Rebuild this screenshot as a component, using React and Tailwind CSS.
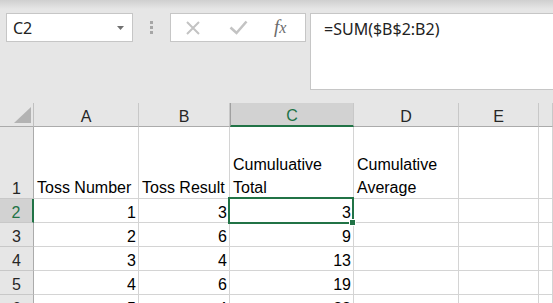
import React from "react";

const rows = [
    {n: "2", a: "1", b: "3", c: "3", selected: true},
    {n: "3", a: "2", b: "6", c: "9"},
    {n: "4", a: "3", b: "4", c: "13"},
    {n: "5", a: "4", b: "6", c: "19"},
    {n: "6", a: "5", b: "4", c: "23"},
];

const headCell = "flex items-end justify-center leading-[18px] bg-[#e6e6e6] border-r border-b border-r-[#c8c8c8] border-b-[#ababab] text-[#262626]";
const rowHead = "flex items-end justify-center leading-[18px] bg-[#e6e6e6] border-r border-b border-r-[#ababab] border-b-[#c8c8c8] text-[#262626]";
const cell = "flex items-end bg-white border-r border-b border-[#d4d4d4] leading-[18px] text-black";
const numCell = "flex items-end justify-end pr-[2px] bg-white border-r border-b border-[#d4d4d4] leading-[18px] text-black";

function FormulaBar() {
    return (
        <div className="h-[103px] flex items-start pt-[13px] pl-[6px] bg-[linear-gradient(#cfcfcf,#e6e6e6_9px)]">
            {/* name box */}
            <div className="shrink-0 w-[127px] h-[29px] flex items-center justify-between bg-white border border-[#c6c6c6] pl-[6px] pr-[8px]">
                <span className="font-['Noto_Sans'] text-[16px] leading-[22px] text-[#222]">C2</span>
                <svg width="7" height="4" viewBox="0 0 7 4"><polygon points="0,0 7,0 3.5,4" fill="#707070"/></svg>
            </div>

            {/* splitter dots */}
            <div className="shrink-0 ml-[17px] mt-[8px] flex flex-col gap-[2px]">
                <div className="w-[3px] h-[3px] bg-[#a6a6a6]"></div>
                <div className="w-[3px] h-[3px] bg-[#a6a6a6]"></div>
                <div className="w-[3px] h-[3px] bg-[#a6a6a6]"></div>
            </div>

            {/* cancel / enter / function */}
            <div className="shrink-0 ml-[17px] w-[136px] h-[29px] flex items-center bg-white border border-[#c6c6c6]">
                <svg className="ml-[15px]" width="14" height="14" viewBox="0 0 14 14">
                    <path d="M1 1 L13 13 M13 1 L1 13" stroke="#c3c3c3" strokeWidth="2"/>
                </svg>
                <svg className="ml-[29px]" width="19" height="15" viewBox="0 0 19 15">
                    <path d="M1.5 7.5 L7.5 13 L17.5 1.5" stroke="#c3c3c3" strokeWidth="2.6" fill="none"/>
                </svg>
                <span className="ml-[26px] font-['Liberation_Serif'] italic text-[#6b6b6b] leading-[20px]">
                    <span className="text-[19px]">f</span><span className="text-[16px]">x</span>
                </span>
            </div>

            {/* formula input */}
            <div className="shrink-0 ml-[4px] w-[260px] h-[77px] bg-white border border-[#c6c6c6] pl-[13px] pt-[3px]">
                <span className="font-['Noto_Sans'] text-[16px] leading-[22px] text-[#222]">=SUM($B$2:B2)</span>
            </div>
        </div>
    );
}

function Sheet() {
    return (
        <div className="relative grid grid-cols-[34px_105px_91px_124px_105px_80px_1fr] grid-rows-[24px_72px_24px_24px_24px_24px_24px] font-['Liberation_Sans'] text-[16px]">
            {/* corner */}
            <div className="flex items-end justify-end pr-[2px] pb-[3px] bg-[#e6e6e6] border-r border-b border-r-[#c0c0c0] border-b-[#ababab]">
                <svg width="17" height="16" viewBox="0 0 17 16"><polygon points="17,0 17,16 0,16" fill="#b3b3b3"/></svg>
            </div>
            <div className={headCell}>A</div>
            <div className={headCell}>B</div>
            <div className="flex items-end justify-center leading-[18px] bg-[#d2d2d2] border-l border-l-[#a0a0a0] border-r border-r-[#c8c8c8] border-b-2 border-b-[#217346] text-[#217346]">C</div>
            <div className={headCell}>D</div>
            <div className={headCell}>E</div>
            <div className={headCell}></div>

            {/* row 1 */}
            <div className={rowHead}>1</div>
            <div className={cell + " pl-[3px]"}><span className="leading-[23px] mb-[-1px]">Toss Number</span></div>
            <div className={cell + " pl-[3px]"}><span className="leading-[23px] mb-[-1px]">Toss Result</span></div>
            <div className={cell + " pl-[3px]"}><span className="leading-[23px] mb-[-1px]">Cumuluative<br/>Total</span></div>
            <div className={cell + " pl-[3px]"}><span className="leading-[23px] mb-[-1px]">Cumulative<br/>Average</span></div>
            <div className={cell}></div>
            <div className={cell}></div>

            {rows.map((r) => (
                <React.Fragment key={r.n}>
                    {r.selected
                        ? <div className="flex items-end justify-center leading-[18px] bg-[#d2d2d2] border-r-2 border-r-[#217346] border-b border-b-[#c8c8c8] text-[#217346]">{r.n}</div>
                        : <div className={rowHead}>{r.n}</div>}
                    <div className={numCell}>{r.a}</div>
                    <div className={numCell}>{r.b}</div>
                    <div className={numCell}>{r.c}</div>
                    <div className={cell}></div>
                    <div className={cell}></div>
                    <div className={cell}></div>
                </React.Fragment>
            ))}

            {/* active cell C2 */}
            <div className="absolute left-[228px] top-[94px] w-[126px] h-[27px] border-2 border-[#217346]"></div>
            <div className="absolute left-[349px] top-[116px] w-[7px] h-[7px] bg-[#217346] border border-white"></div>
        </div>
    );
}

export default function App() {
    return (
        <div className="w-[553px] h-[303px] overflow-hidden bg-[#e6e6e6]">
            <FormulaBar/>
            <Sheet/>
        </div>
    );
}
